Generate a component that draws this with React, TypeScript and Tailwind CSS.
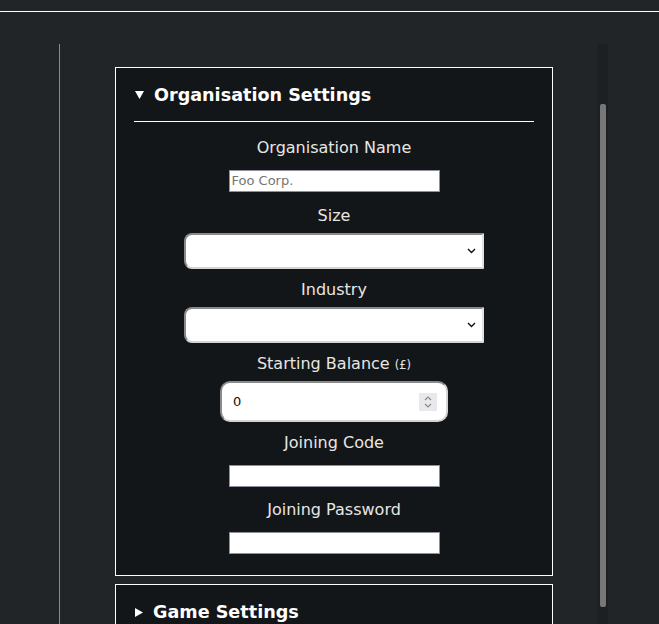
import React from 'react';

const font = { fontFamily: '"DejaVu Sans", "Liberation Sans", sans-serif' };

function Chevron() {
  return (
    <svg width="9" height="6" viewBox="0 0 9 6" className="shrink-0">
      <path d="M1 1 L4.5 4.5 L8 1" fill="none" stroke="#111" strokeWidth="1.4" />
    </svg>
  );
}

function Label({ children, mt }: { children: React.ReactNode; mt: string }) {
  return (
    <div className={`${mt} text-center text-[16px] leading-[19px] text-[#e8e6e3]`}>{children}</div>
  );
}

function TextBox({ mt, placeholder }: { mt: string; placeholder?: string }) {
  return (
    <div
      className={`${mt} mx-auto flex h-[22px] w-[211px] items-center border border-[#8f8f9d] bg-white pl-[2px] text-[13px] text-[#757575]`}
    >
      {placeholder}
    </div>
  );
}

function SelectBox({ mt }: { mt: string }) {
  return (
    <div
      className={`${mt} ml-[50px] flex h-[36px] w-[300px] items-center justify-end rounded-l-[8px] border-2 border-t-[#8a8a8a] border-l-[#8a8a8a] border-b-[#d4d4d4] border-r-[#e0e0e0] bg-white pr-[6px]`}
    >
      <Chevron />
    </div>
  );
}

function Panel({ title, open, children }: { title: string; open?: boolean; children?: React.ReactNode }) {
  return (
    <div className="ml-[55px] w-[438px] border border-white bg-[#131619] px-[18px] pt-[15px] pb-[21px]">
      <div className="flex h-[24px] items-center gap-[10px] pl-[1px] text-[17.6px] font-bold text-white">
        {open ? (
          <svg width="9" height="8" viewBox="0 0 9 8">
            <path d="M0 0 H9 L4.5 8 Z" fill="white" />
          </svg>
        ) : (
          <svg width="8" height="9" viewBox="0 0 8 9">
            <path d="M0 0 V9 L8 4.5 Z" fill="white" />
          </svg>
        )}
        <span>{title}</span>
      </div>
      {children}
    </div>
  );
}

export default function App() {
  return (
    <div className="h-[624px] overflow-hidden bg-[#222528]" style={font}>
      <div className="h-[12px] border-b border-white" />
      <div className="mt-[32px] flex h-[580px]">
        <div className="ml-[59px] flex w-[538px] flex-col gap-[8px] overflow-hidden border-l border-[#8a8a8a] pt-[23px]">
          <Panel title="Organisation Settings" open>
            <div className="mt-[14px] border-t border-white" />
            <Label mt="mt-[16px]">Organisation Name</Label>
            <TextBox mt="mt-[13px]" placeholder="Foo Corp." />
            <Label mt="mt-[14px]">Size</Label>
            <SelectBox mt="mt-[8px]" />
            <Label mt="mt-[11px]">Industry</Label>
            <SelectBox mt="mt-[8px]" />
            <Label mt="mt-[11px]">
              Starting Balance <span className="text-[11.5px]">(£)</span>
            </Label>
            <div className="mt-[6px] ml-[86px] flex h-[41px] w-[228px] items-center justify-between rounded-[10px] border-2 border-t-[#8a8a8a] border-l-[#8a8a8a] border-b-[#d4d4d4] border-r-[#d4d4d4] bg-white pl-[11px] pr-[9px] text-[13px] text-[#111]">
              <span>0</span>
              <div className="flex h-[18px] w-[18px] flex-col items-center justify-center gap-[2px] bg-[#e9e9ed]">
                <svg width="8" height="5" viewBox="0 0 8 5">
                  <path d="M1 4 L4 1 L7 4" fill="none" stroke="#8a8a8a" strokeWidth="1.2" />
                </svg>
                <svg width="8" height="5" viewBox="0 0 8 5">
                  <path d="M1 1 L4 4 L7 1" fill="none" stroke="#8a8a8a" strokeWidth="1.2" />
                </svg>
              </div>
            </div>
            <Label mt="mt-[11px]">Joining Code</Label>
            <TextBox mt="mt-[13px]" />
            <Label mt="mt-[13px]">Joining Password</Label>
            <TextBox mt="mt-[13px]" />
          </Panel>
          <Panel title="Game Settings" />
        </div>
        <div className="w-[11px] bg-[#1d2023] pt-[60px]">
          <div className="ml-[3px] h-[503px] w-[6px] rounded-[2px] bg-[#777]" />
        </div>
      </div>
    </div>
  );
}
